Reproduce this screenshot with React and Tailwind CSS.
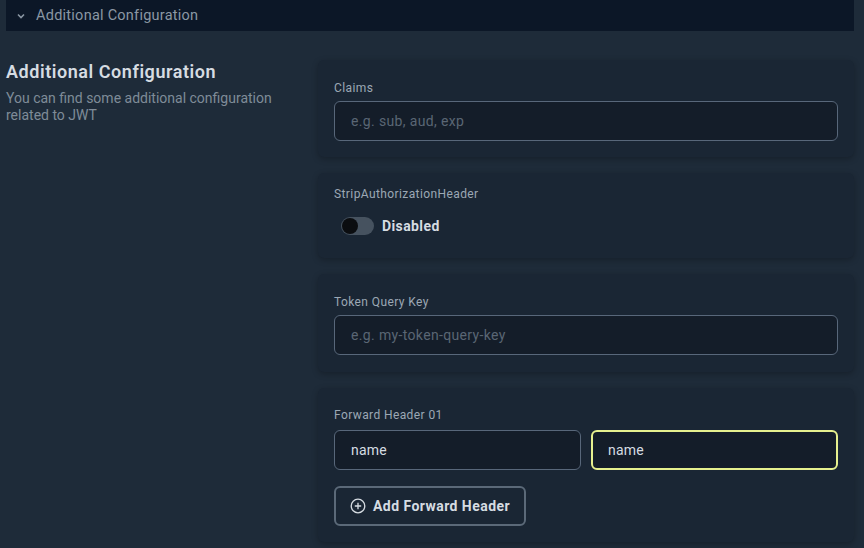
import React, { useState } from "react";

function Card({ children, className = "" }) {
  return (
    <div className={"rounded-md bg-[#1a2634] px-4 shadow-[0_2px_6px_rgba(0,0,0,0.25)] " + className}>
      {children}
    </div>
  );
}

function Label({ children }) {
  return <div className="text-[12px] leading-[14px] tracking-[0.4px] text-[#9ca8b4]">{children}</div>;
}

const inputCls =
  "h-[40px] w-full rounded-md border border-[#58677a] bg-[#141d29] px-4 text-[14px] tracking-[0.35px] text-[#d6dce2] outline-none placeholder:text-[#5a6674]";

export default function App() {
  const [enabled, setEnabled] = useState(false);
  return (
    <div className="h-[548px] w-[864px] overflow-hidden bg-[#1e2b39] font-['Roboto','Liberation_Sans',sans-serif]">
      {/* collapsible header */}
      <div className="ml-[6px] mr-[10px] flex h-[31px] items-center gap-[10px] bg-[#0c1727] pl-[10px]">
        <svg width="10" height="10" viewBox="0 0 10 10" fill="none" stroke="#8a96a3" strokeWidth="1.6">
          <path d="M2 3.5 L5 6.5 L8 3.5" />
        </svg>
        <span className="text-[14.5px] tracking-[0.25px] text-[#8b97a4]">Additional Configuration</span>
      </div>

      <div className="mt-[29px] flex">
        <div className="w-[318px] pl-[6px] pr-4">
          <h2 className="mt-[1px] text-[18px] font-semibold leading-[22px] tracking-[0.55px] text-[#d6dce2]">
            Additional Configuration
          </h2>
          <p className="mt-[7px] text-[14px] leading-[17px] text-[#7f8b98]">
            You can find some additional configuration related to JWT
          </p>
        </div>

        <div className="flex w-[536px] flex-col gap-4">
          <Card className="pb-[16px] pt-[21px]">
            <Label>Claims</Label>
            <input placeholder="e.g. sub, aud, exp" className={"mt-[6px] " + inputCls} />
          </Card>

          <Card className="pb-[23px] pt-[14px]">
            <Label>StripAuthorizationHeader</Label>
            <div className="mt-[16px] flex h-[18px] items-center gap-[8px] pl-[7px]">
              <button
                onClick={() => setEnabled(!enabled)}
                className="relative h-[18px] w-[33px] rounded-full bg-[#46525f]"
              >
                <span
                  className={
                    "absolute top-[1px] h-[16px] w-[16px] rounded-full bg-[#0b0d10] " +
                    (enabled ? "left-[16px]" : "left-[1px]")
                  }
                />
              </button>
              <span className="text-[14px] font-bold tracking-[0.4px] text-[#d6dce2]">
                {enabled ? "Enabled" : "Disabled"}
              </span>
            </div>
          </Card>

          <Card className="pb-[17px] pt-[21px]">
            <Label>Token Query Key</Label>
            <input placeholder="e.g. my-token-query-key" className={"mt-[6px] " + inputCls} />
          </Card>

          <Card className="pb-[16px] pt-[20px]">
            <Label>Forward Header 01</Label>
            <div className="mt-[8px] flex gap-[10px]">
              <input
                defaultValue="name"
                className="h-[40px] min-w-0 flex-1 rounded-md border border-[#58677a] bg-[#141d29] px-4 text-[14px] tracking-[0.2px] text-[#d6dce2] outline-none"
              />
              <input
                defaultValue="name"
                className="h-[40px] min-w-0 flex-1 rounded-md border-2 border-[#e6f08e] bg-[#141d29] px-[15px] text-[14px] tracking-[0.2px] text-[#d6dce2] outline-none"
              />
            </div>
            <button className="mt-[16px] flex h-[40px] items-center gap-[7px] rounded-md border-2 border-[#5b6978] px-[14px] text-[14px] font-bold tracking-[0.45px] text-[#d6dce2]">
              <svg width="16" height="16" viewBox="0 0 16 16" fill="none" stroke="#d6dce2" strokeWidth="1.3">
                <circle cx="8" cy="8" r="6.8" />
                <path d="M8 4.8 V11.2 M4.8 8 H11.2" />
              </svg>
              Add Forward Header
            </button>
          </Card>
        </div>
      </div>
    </div>
  );
}
